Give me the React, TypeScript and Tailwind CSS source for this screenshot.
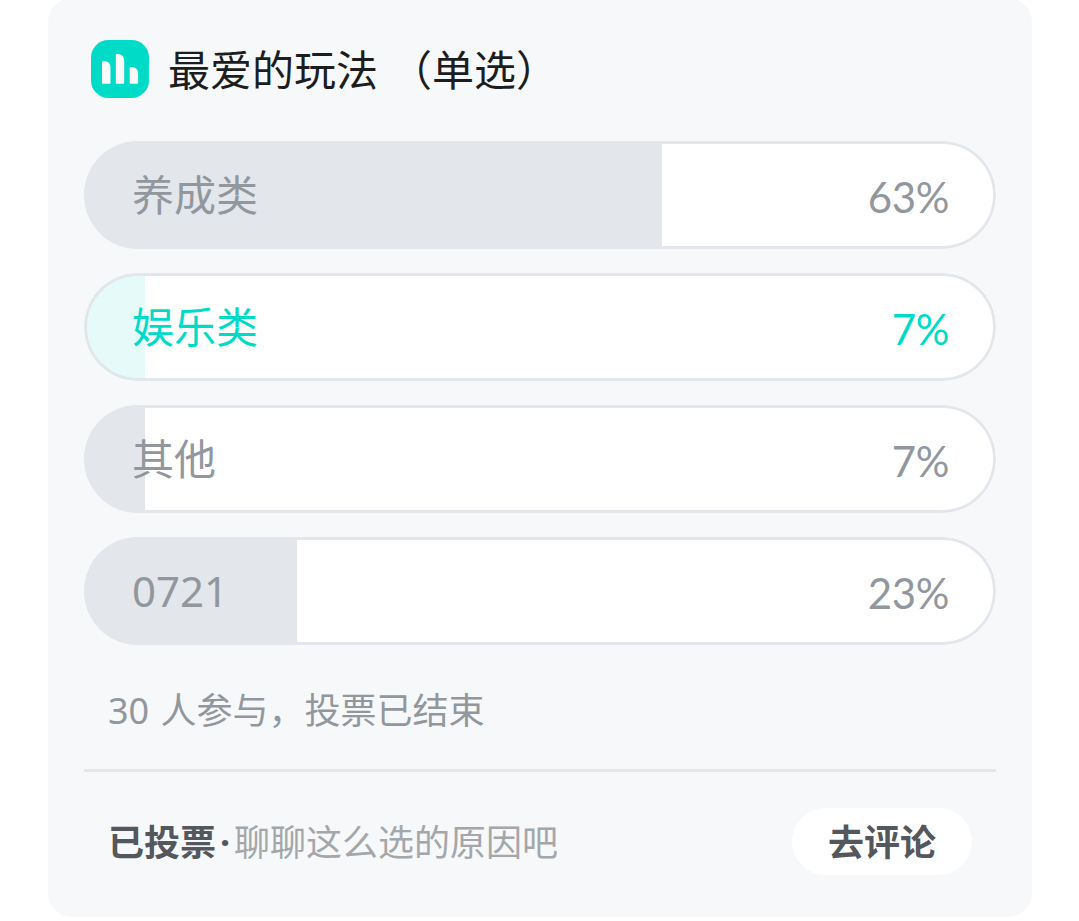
type PollOption = {
  label: string;
  votes: number;
  selected?: boolean;
};

const options: PollOption[] = [
  { label: "养成类", votes: 19 },
  { label: "娱乐类", votes: 2, selected: true },
  { label: "其他", votes: 2 },
  { label: "0721", votes: 7 },
];

const totalVotes = options.reduce((sum, option) => sum + option.votes, 0);

function PollIcon() {
  return (
    <svg width="58" height="58" viewBox="0 0 58 58" className="shrink-0">
      <rect width="58" height="58" rx="17.5" fill="#00dbc8" />
      <g fill="#f9fafc">
        <path d="M11 22a1 1 0 0 1 1-1h1.5a6 6 0 0 1 6 6v15.7a1 1 0 0 1-1 1H12a1 1 0 0 1-1-1z" />
        <path d="M24.8 15a1 1 0 0 1 1-1h1.4a6 6 0 0 1 6 6v22.7a1 1 0 0 1-1 1h-6.4a1 1 0 0 1-1-1z" />
        <path d="M38.7 28a1 1 0 0 1 1-1h1.4a6 6 0 0 1 6 6v9.7a1 1 0 0 1-1 1h-6.4a1 1 0 0 1-1-1z" />
      </g>
    </svg>
  );
}

function OptionRow({ label, votes, selected }: PollOption) {
  const share = (votes / totalVotes) * 100;

  return (
    <li
      className={`relative flex h-[108px] items-center justify-between overflow-hidden rounded-full bg-white pr-[47px] pl-12 text-[42px] leading-none ${
        selected ? "text-[#00dbc8]" : "text-[#91979d]"
      }`}
    >
      {/* result bar, under the outline */}
      <div
        className={`absolute inset-y-0 left-0 ${selected ? "bg-[#e5faf9]" : "bg-[#e3e6eb]"}`}
        style={{ width: `${share}%` }}
      />
      <div className="absolute inset-0 rounded-full border-3 border-[#e3e6eb]" />
      <span className="relative">{label}</span>
      <span className="relative pt-[3px] font-['Lato','Noto_Sans_CJK_SC',sans-serif] tracking-[-0.4px]">
        {Math.round(share)}%
      </span>
    </li>
  );
}

export default function App() {
  return (
    <div className="h-[921px] overflow-hidden bg-white px-12 font-['Noto_Sans','Noto_Sans_CJK_SC',sans-serif]">
      <section className="-mt-0.5 h-[919px] w-[984px] rounded-3xl bg-[#f7f8fa] px-9 pt-[42px]">
        <header className="flex h-[58px] items-center gap-[19px] pl-[7px]">
          <PollIcon />
          <h1 className="pt-0.5 text-[42px] leading-none [word-spacing:1px] whitespace-nowrap text-[#1c1d1f]">
            最爱的玩法 （单选）
          </h1>
        </header>

        <ul className="mt-[43px] flex flex-col gap-6">
          {options.map((option) => (
            <OptionRow key={option.label} {...option} />
          ))}
        </ul>

        <p className="mt-12 pl-6 text-4xl leading-9 [word-spacing:2px] text-[#91979d]">
          {totalVotes} 人参与，投票已结束
        </p>

        <footer className="mt-10 flex items-start justify-between border-t-3 border-[#e3e6eb] pt-9 pr-6 pl-6">
          <div className="flex h-[67px] items-center pt-[3px] text-4xl leading-none">
            <span className="font-bold text-[#54575c]">已投票</span>
            <span className="w-[18px] text-center font-bold text-[#54575c]">·</span>
            <span className="text-[#a4a7aa]">聊聊这么选的原因吧</span>
          </div>
          <button className="h-[67px] w-[180px] rounded-full bg-white pt-[3px] text-4xl leading-none font-bold text-[#54575c]">
            去评论
          </button>
        </footer>
      </section>
    </div>
  );
}
